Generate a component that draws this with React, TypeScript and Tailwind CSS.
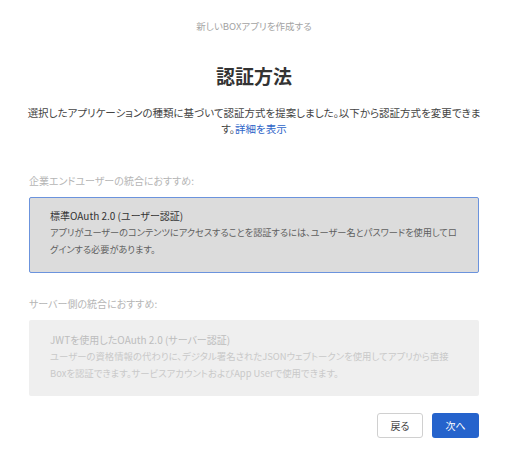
const font = "font-['Noto_Sans_CJK_JP','Noto_Sans',sans-serif] [font-feature-settings:'palt']";

const options = [
  {
    label: '企業エンドユーザーの統合におすすめ:',
    title: '標準OAuth 2.0 (ユーザー認証)',
    lines: [
      'アプリがユーザーのコンテンツにアクセスすることを認証するには、ユーザー名とパスワードを使用してロ',
      'グインする必要があります。',
    ],
    selected: true,
  },
  {
    label: 'サーバー側の統合におすすめ:',
    title: 'JWTを使用したOAuth 2.0 (サーバー認証)',
    lines: [
      'ユーザーの資格情報の代わりに、デジタル署名されたJSONウェブトークンを使用してアプリから直接',
      'Boxを認証できます。サービスアカウントおよびApp Userで使用できます。',
    ],
    selected: false,
  },
];

export default function App() {
  return (
    <div className={`${font} w-[513px] h-[462px] overflow-hidden bg-white pl-[29px] pr-[34px] flex flex-col items-center`}>
      <p className="mt-[19px] text-[9.5px] leading-[14px] text-[#a3a3a3] whitespace-nowrap">新しいBOXアプリを作成する</p>

      <h1 className="mt-[31px] text-[19px] leading-[24px] font-bold text-[#333] whitespace-nowrap">認証方法</h1>

      <p className="mt-[17px] text-center text-[10.5px] leading-[16px] text-[#444] whitespace-nowrap">
        選択したアプリケーションの種類に基づいて認証方式を提案しました。以下から認証方式を変更できま
        <br />
        す。<span className="text-[#2d64c8]">詳細を表示</span>
      </p>

      <div className="mt-[37px] w-full flex flex-col">
        {options.map((o, i) => (
          <div key={o.title} className={i > 0 ? 'mt-[24px]' : ''}>
            <p className="text-[10px] leading-[14px] text-[#b5b5b5] whitespace-nowrap">{o.label}</p>
            <div
              className={
                o.selected
                  ? 'mt-[9px] h-[76px] rounded-[2px] border-[1.5px] border-[#6b93dd] bg-[#dcdcdc] pl-[20px] pt-[9px] overflow-hidden'
                  : 'mt-[9px] h-[76px] rounded-[2px] bg-[#efefef] pl-[21px] pt-[10.5px] overflow-hidden'
              }
            >
              <p className={`text-[10px] leading-[17px] whitespace-nowrap ${o.selected ? 'text-[#333]' : 'text-[#bdbdbd]'}`}>
                {o.title}
              </p>
              {o.lines.map((l) => (
                <p
                  key={l}
                  className={`leading-[17px] whitespace-nowrap ${o.selected ? 'text-[9.2px] text-[#5f5f5f]' : 'text-[9.4px] text-[#c9c9c9]'}`}
                >
                  {l}
                </p>
              ))}
            </div>
          </div>
        ))}
      </div>

      <div className="mt-[17px] w-full flex justify-end gap-[9px]">
        <button className="h-[25px] w-[46px] rounded-[3px] border border-[#d0d0d0] bg-white text-[10px] text-[#444]">
          戻る
        </button>
        <button className="h-[25px] w-[47px] rounded-[3px] bg-[#2563cc] text-[10px] text-white">次へ</button>
      </div>
    </div>
  );
}
